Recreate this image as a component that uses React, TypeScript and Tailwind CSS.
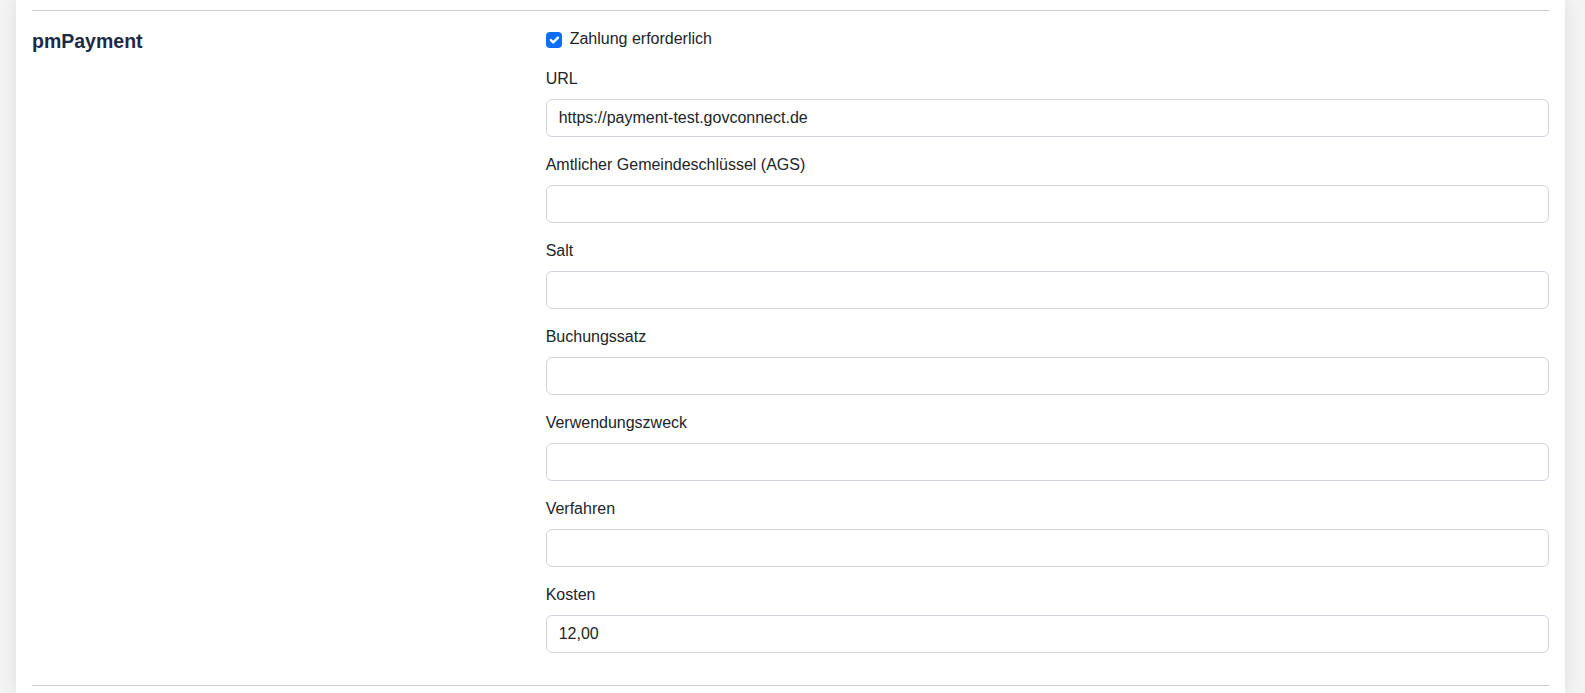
import React from "react";

const fields: { label: string; value: string }[] = [
  { label: "URL", value: "https://payment-test.govconnect.de" },
  { label: "Amtlicher Gemeindeschlüssel (AGS)", value: "" },
  { label: "Salt", value: "" },
  { label: "Buchungssatz", value: "" },
  { label: "Verwendungszweck", value: "" },
  { label: "Verfahren", value: "" },
  { label: "Kosten", value: "12,00" },
];

export default function App() {
  return (
    <div
      className="min-h-[693px] bg-[#f3f3f3] pl-[16px] pr-[20px] text-[16px] leading-[24px] text-[#212529]"
      style={{ fontFamily: '"Liberation Sans", Arial, sans-serif' }}
    >
      <div className="min-h-[693px] bg-white px-[16px] pt-[10px] shadow-[0_0_16px_rgba(0,0,0,0.09)]">
        <div className="h-px bg-[#c9cacb]" />
        <div className="-mx-3 mt-4 flex">
          <div className="w-1/3 px-3">
            <h5 className="mt-[3px] text-[19.5px] font-bold leading-[1.2] text-[#1c2a47]">pmPayment</h5>
          </div>
          <div className="w-2/3 px-3">
            <div className="mb-4 flex h-6 items-center">
              <span className="mr-2 mt-[1px] flex h-4 w-4 items-center justify-center rounded-[4px] bg-[#0d6efd]">
                <svg viewBox="0 0 20 20" className="h-4 w-4">
                  <path
                    d="m6 10 3 3 6-6"
                    fill="none"
                    stroke="#fff"
                    strokeWidth="3"
                    strokeLinecap="round"
                    strokeLinejoin="round"
                  />
                </svg>
              </span>
              <span>Zahlung erforderlich</span>
            </div>
            {fields.map((f) => (
              <div key={f.label} className="mb-4">
                <div className="mb-2">{f.label}</div>
                <div className="flex h-[38px] items-center rounded-[6px] border border-[#ced4da] bg-white px-3">
                  {f.value}
                </div>
              </div>
            ))}
          </div>
        </div>
        <div className="mt-4 h-px bg-[#c9cacb]" />
      </div>
    </div>
  );
}
